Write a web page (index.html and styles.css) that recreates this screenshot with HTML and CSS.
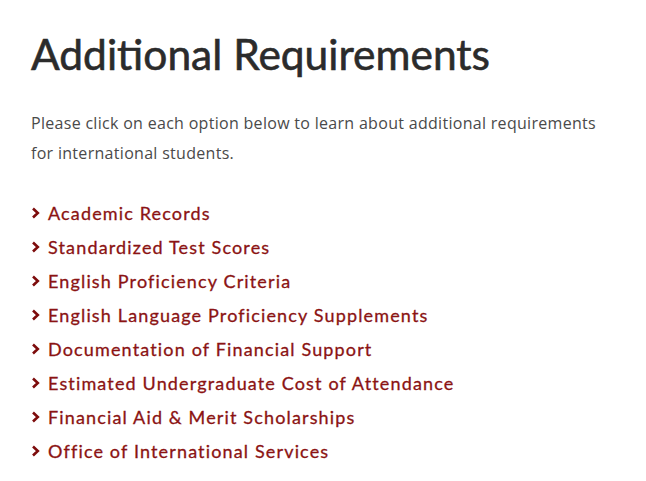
FILE: index.html
```html
<!DOCTYPE html>
<html>
<head>
    <title>Additional Requirements</title>
    <meta charset="UTF-8">
    <meta name="viewport" content="width=device-width, initial-scale=1.0">
    <link rel="stylesheet" href="styles.css">
</head>
<body>
    <div class="content">
        <h1 class="title">Additional Requirements</h1>

        <p class="intro">Please click on each option below to learn about additional requirements for international students.</p>

        <ul class="options">
            <li><a href="#"><svg class="chevron" viewBox="0 0 9 12"><polyline points="2,1.5 6.8,6 2,10.5"/></svg>Academic Records</a></li>
            <li><a href="#"><svg class="chevron" viewBox="0 0 9 12"><polyline points="2,1.5 6.8,6 2,10.5"/></svg>Standardized Test Scores</a></li>
            <li><a href="#"><svg class="chevron" viewBox="0 0 9 12"><polyline points="2,1.5 6.8,6 2,10.5"/></svg>English Proficiency Criteria</a></li>
            <li><a href="#"><svg class="chevron" viewBox="0 0 9 12"><polyline points="2,1.5 6.8,6 2,10.5"/></svg>English Language Proficiency Supplements</a></li>
            <li><a href="#"><svg class="chevron" viewBox="0 0 9 12"><polyline points="2,1.5 6.8,6 2,10.5"/></svg>Documentation of Financial Support</a></li>
            <li><a href="#"><svg class="chevron" viewBox="0 0 9 12"><polyline points="2,1.5 6.8,6 2,10.5"/></svg>Estimated Undergraduate Cost of Attendance</a></li>
            <li><a href="#"><svg class="chevron" viewBox="0 0 9 12"><polyline points="2,1.5 6.8,6 2,10.5"/></svg>Financial Aid &amp; Merit Scholarships</a></li>
            <li><a href="#"><svg class="chevron" viewBox="0 0 9 12"><polyline points="2,1.5 6.8,6 2,10.5"/></svg>Office of International Services</a></li>
        </ul>
    </div>
</body>
</html>
```

FILE: styles.css
```css
body {
    font-family: "Open Sans", Arial, sans-serif;
    background-color: #FFFFFF;
    margin: 0;
}

.content {
    padding: 24px 31px;
    width: 580px;
}

.title {
    font-family: Lato, Arial, sans-serif;
    font-size: 42.5px;
    font-weight: 400;
    -webkit-text-stroke: 0.6px #2b2b2b;
    color: #2b2b2b;
    margin: 0 0 24px 0;
    line-height: 60px;
}

.intro {
    font-family: "Open Sans", Arial, sans-serif;
    font-size: 16px;
    letter-spacing: 0.3px;
    line-height: 30px;
    color: #4a4a4a;
    margin: 0 0 28px 0;
}

.options {
    list-style: none;
    margin: 0;
    padding: 0;
}

.options li {
    height: 34px;
    display: flex;
    align-items: center;
}

.options a {
    display: flex;
    align-items: center;
    font-family: Lato, Arial, sans-serif;
    font-size: 18px;
    letter-spacing: 1.15px;
    -webkit-text-stroke: 0.3px #8b1313;
    color: #8b1313;
    text-decoration: none;
}

.chevron {
    width: 9px;
    height: 12px;
    margin: 0 8px 0 0;
    fill: none;
    stroke: #7d0c0c;
    stroke-width: 2.6;
}
```
